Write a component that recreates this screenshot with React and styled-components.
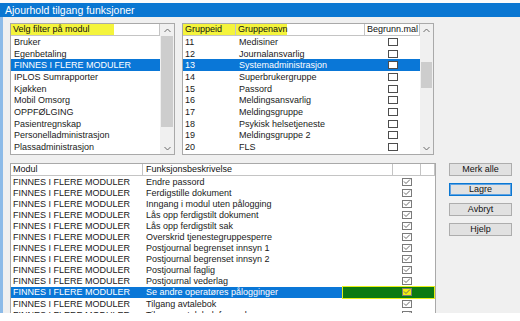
import React from 'react'
import styled, { createGlobalStyle } from 'styled-components'

const GlobalStyle = createGlobalStyle`
  html, body { margin: 0; padding: 0; background: #fff; }
  body { font-family: "Liberation Sans", Arial, sans-serif; }
`

const Window = styled.div`
    width: 520px;
    height: 313px;
    display: flex;
    flex-direction: column;
    overflow: hidden;
    background: #f0f0f0;
`

const TopStrip = styled.div`
    height: 3px;
    background: #fbfbfb;
`

const TitleBar = styled.div`
    height: 14px;
    background: #0a77d2;
    color: #fff;
    font-size: 10.5px;
    line-height: 14px;
    padding-left: 5px;
    white-space: nowrap;
`

const Frame = styled.div`
    flex: 1;
    display: flex;
    min-height: 0;
`

const SideBorder = styled.div`
    width: 3px;
    background: #8dbbe8;
`

const Body = styled.div`
    flex: 1;
    min-height: 0;
    padding: 6px 0 0 7px;
    display: flex;
    flex-direction: column;
    gap: 8px;
`

const TopRow = styled.div`
    display: flex;
    gap: 7px;
    height: 132px;
`

const BottomRow = styled.div`
    flex: 1;
    min-height: 0;
    display: flex;
    gap: 13px;
`

const ListBox = styled.div`
    width: ${p => p.$w}px;
    height: ${p => p.$h}px;
    box-sizing: border-box;
    border: 1px solid #a9a9a9;
    background: #fff;
    display: flex;
    flex: none;
`

const ListMain = styled.div`
    flex: 1;
    min-width: 0;
    display: flex;
    flex-direction: column;
`

const HeaderRow = styled.div`
    display: flex;
    height: 12px;
    flex: none;
`

const HeaderCell = styled.div`
    width: ${p => (p.$w ? `${p.$w}px` : 'auto')};
    flex: ${p => (p.$w ? 'none' : 1)};
    box-sizing: border-box;
    border-right: 1px solid #c4c4c4;
    border-bottom: 1px solid #c4c4c4;
    background: ${p => (p.$hl ? '#f4f43c' : '#fff')};
    font-size: 9px;
    line-height: 11px;
    padding-left: ${p => p.$pad ?? 2}px;
    color: #111;
    white-space: nowrap;
    overflow: hidden;
`

const Mark = styled.span`
    display: inline-block;
    width: ${p => p.$w}px;
    margin-left: -2px;
    padding-left: 2px;
    background: #f4f43c;
`

const Row = styled.div`
    display: flex;
    align-items: center;
    height: ${p => p.$h}px;
    flex: none;
    position: relative;
    background: ${p => (p.$sel ? '#0a77d7' : 'transparent')};
    color: ${p => (p.$sel ? '#fff' : '#1a1a1a')};
    font-size: 9px;
`

const Cell = styled.div`
    width: ${p => (p.$w ? `${p.$w}px` : 'auto')};
    flex: ${p => (p.$w ? 'none' : 1)};
    padding-left: ${p => p.$pad ?? 3}px;
    box-sizing: border-box;
    white-space: nowrap;
    overflow: hidden;
    display: flex;
    justify-content: ${p => (p.$center ? 'center' : 'flex-start')};
    position: relative;
    z-index: 1;
`

const ScrollBar = styled.div`
    width: ${p => p.$w}px;
    flex: none;
    display: flex;
    flex-direction: column;
    background: #f0f0f0;
`

const ScrollArrow = styled.div`
    height: 12px;
    flex: none;
    display: flex;
    align-items: center;
    justify-content: center;
`

const ScrollTrack = styled.div`
    flex: 1;
    padding: 0 1px;
`

const Thumb = styled.div`
    margin-top: ${p => p.$top}px;
    height: ${p => p.$h}px;
    background: #cdcdcd;
`

const Box = styled.span`
    width: 10px;
    height: 8px;
    box-sizing: border-box;
    border: 1px solid ${p => (p.$checked ? '#7a7a7a' : '#4d4d4d')};
    background: ${p => (p.$yellow ? '#f2ee10' : '#fff')};
    display: inline-flex;
    align-items: center;
    justify-content: center;
`

const Marker = styled.div`
    position: absolute;
    left: 331px;
    right: 0;
    top: -1px;
    bottom: -1px;
    background: #0c7a12;
    border: 1.5px solid #e8f018;
    box-sizing: border-box;
`

const ButtonColumn = styled.div`
    width: 63px;
    display: flex;
    flex-direction: column;
    gap: 7px;
`

const Button = styled.button`
    height: 13px;
    padding: 0;
    font-family: "Liberation Sans", Arial, sans-serif;
    font-size: 9px;
    line-height: 11px;
    color: #111;
    background: #e1e1e1;
    border: 1px solid ${p => (p.$focus ? '#0a77d2' : '#adadad')};
    box-shadow: ${p => (p.$focus ? 'inset 0 0 0 1px #5fa3e3' : 'none')};
`

const Chevron = ({ up }) => (
    <svg width="7" height="5" viewBox="0 0 7 5">
        <polyline
            points={up ? '0.5,4 3.5,1 6.5,4' : '0.5,1 3.5,4 6.5,1'}
            fill="none"
            stroke="#6a6a6a"
            strokeWidth="1"
        />
    </svg>
)

const Tick = () => (
    <svg width="8" height="6" viewBox="0 0 8 6">
        <polyline points="1,2.5 3,4.5 7,0.5" fill="none" stroke="#6a6a6a" strokeWidth="1" />
    </svg>
)

const Scroller = ({ w, top, h }) => (
    <ScrollBar $w={w}>
        <ScrollArrow><Chevron up /></ScrollArrow>
        <ScrollTrack><Thumb $top={top} $h={h} /></ScrollTrack>
        <ScrollArrow><Chevron /></ScrollArrow>
    </ScrollBar>
)

const modules = [
    'Bruker',
    'Egenbetaling',
    'FINNES I FLERE MODULER',
    'IPLOS Sumrapporter',
    'Kjøkken',
    'Mobil Omsorg',
    'OPPFØLGING',
    'Pasientregnskap',
    'Personelladministrasjon',
    'Plassadministrasjon',
]

const groups = [
    [11, 'Medisiner'],
    [12, 'Journalansvarlig'],
    [13, 'Systemadministrasjon'],
    [14, 'Superbrukergruppe'],
    [15, 'Passord'],
    [16, 'Meldingsansvarlig'],
    [17, 'Meldingsgruppe'],
    [18, 'Psykisk helsetjeneste'],
    [19, 'Meldingsgruppe 2'],
    [20, 'FLS'],
]

const functions = [
    'Endre passord',
    'Ferdigstille dokument',
    'Inngang i modul uten pålogging',
    'Lås opp ferdigstilt dokument',
    'Lås opp ferdigstilt sak',
    'Overskrid tjenestegruppesperre',
    'Postjournal begrenset innsyn 1',
    'Postjournal begrenset innsyn 2',
    'Postjournal faglig',
    'Postjournal vederlag',
    'Se andre operatøres pålogginger',
    'Tilgang avtalebok',
    'Tilgang avtalebok for andre',
]

const App = () => {
    return (
        <>
            <GlobalStyle />
            <Window>
                <TopStrip />
                <TitleBar>Ajourhold tilgang funksjoner</TitleBar>
                <Frame>
                    <SideBorder />
                    <Body>
                        <TopRow>
                            <ListBox $w={165} $h={132}>
                                <ListMain>
                                    <HeaderRow>
                                        <HeaderCell>
                                            <Mark $w={101}>Velg filter på modul</Mark>
                                        </HeaderCell>
                                    </HeaderRow>
                                    {modules.map((m, i) => (
                                        <Row key={m} $h={11.7} $sel={i === 2}>
                                            <Cell>{m}</Cell>
                                        </Row>
                                    ))}
                                </ListMain>
                                <Scroller w={14} top={0} h={91} />
                            </ListBox>

                            <ListBox $w={252} $h={132}>
                                <ListMain>
                                    <HeaderRow>
                                        <HeaderCell $w={53} $hl>Gruppeid</HeaderCell>
                                        <HeaderCell $w={129} $pad={2}>
                                            <Mark $w={49}>Gruppenavn</Mark>
                                        </HeaderCell>
                                        <HeaderCell>Begrunn.mal</HeaderCell>
                                    </HeaderRow>
                                    {groups.map(([id, name], i) => (
                                        <Row key={id} $h={11.7} $sel={i === 2}>
                                            <Cell $w={53} $pad={2}>{id}</Cell>
                                            <Cell $w={129}>{name}</Cell>
                                            <Cell $center $pad={0}><Box /></Cell>
                                        </Row>
                                    ))}
                                </ListMain>
                                <Scroller w={13} top={26} h={26} />
                            </ListBox>
                        </TopRow>

                        <BottomRow>
                            <ListBox $w={426} $h={170}>
                                <ListMain>
                                    <HeaderRow>
                                        <HeaderCell $w={132}>Modul</HeaderCell>
                                        <HeaderCell $w={250} $pad={3}>Funksjonsbeskrivelse</HeaderCell>
                                        <HeaderCell $w={28} />
                                        <HeaderCell />
                                    </HeaderRow>
                                    {functions.map((f, i) => (
                                        <Row key={f} $h={11.1} $sel={i === 10}>
                                            {i === 10 && <Marker />}
                                            <Cell $w={132} $pad={2}>FINNES I FLERE MODULER</Cell>
                                            <Cell $w={250}>{f}</Cell>
                                            <Cell $w={28} $center $pad={0}>
                                                <Box $checked $yellow={i === 10}><Tick /></Box>
                                            </Cell>
                                            <Cell />
                                        </Row>
                                    ))}
                                </ListMain>
                            </ListBox>
                            <ButtonColumn>
                                <Button>Merk alle</Button>
                                <Button $focus>Lagre</Button>
                                <Button>Avbryt</Button>
                                <Button>Hjelp</Button>
                            </ButtonColumn>
                        </BottomRow>
                    </Body>
                </Frame>
            </Window>
        </>
    )
}

export default App
